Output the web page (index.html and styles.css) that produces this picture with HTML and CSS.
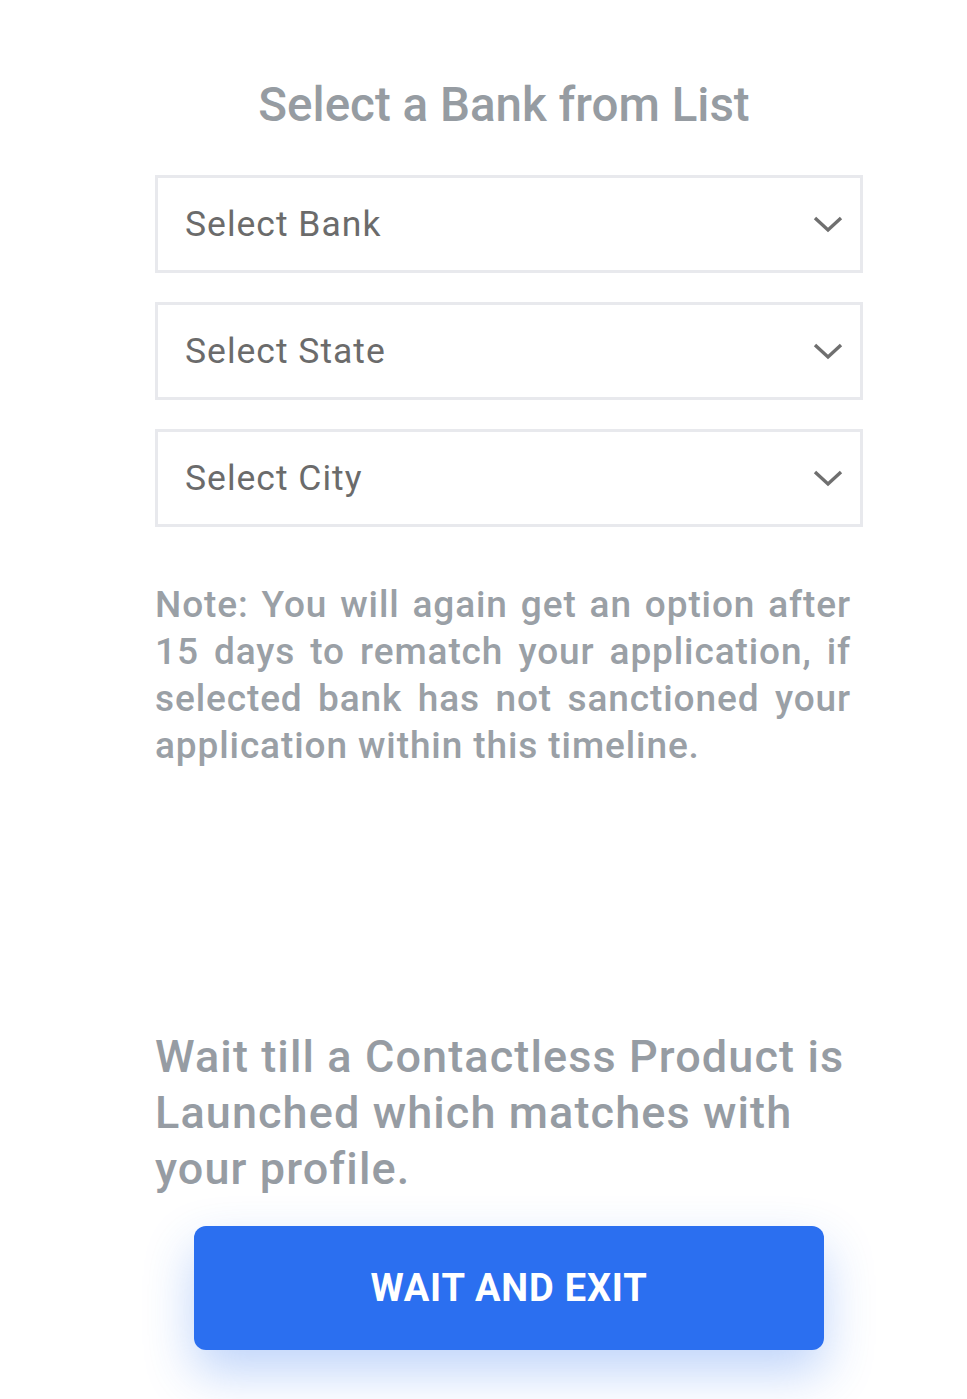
FILE: index.html
```html
<!DOCTYPE html>
<html>
<head>
<meta charset="utf-8">
<link rel="stylesheet" href="styles.css">
</head>
<body>
<main class="page">
  <h1 class="title">Select a Bank from List</h1>
  <div class="selects">
    <div class="select"><span>Select Bank</span><svg class="chev" viewBox="0 0 32 20" width="32" height="20"><path d="M3 4 L16 16 L29 4" fill="none" stroke="#6f6f6f" stroke-width="3.4"/></svg></div>
    <div class="select"><span>Select State</span><svg class="chev" viewBox="0 0 32 20" width="32" height="20"><path d="M3 4 L16 16 L29 4" fill="none" stroke="#6f6f6f" stroke-width="3.4"/></svg></div>
    <div class="select"><span>Select City</span><svg class="chev" viewBox="0 0 32 20" width="32" height="20"><path d="M3 4 L16 16 L29 4" fill="none" stroke="#6f6f6f" stroke-width="3.4"/></svg></div>
  </div>
  <p class="note">Note: You will again get an option after 15 days to rematch your application, if selected bank has not sanctioned your application within this timeline.</p>
  <p class="wait">Wait till a Contactless Product is Launched which matches with your profile.</p>
  <button class="btn">WAIT AND EXIT</button>
</main>
</body>
</html>
```
FILE: styles.css
```css
html, body { margin: 0; padding: 0; background: #ffffff; }
body { font-family: Roboto, "Noto Sans", sans-serif; }
.page { width: 708px; margin-left: 155px; padding-bottom: 49px; display: flex; flex-direction: column; }
.title { margin: 77px 10px 0 0; font-size: 47.5px; line-height: 56px; font-weight: 500; color: #969ca2; text-align: center; }
.selects { margin-top: 42px; display: flex; flex-direction: column; gap: 29px; }
.select { box-sizing: border-box; height: 98px; border: 3px solid #e8e9ed; display: flex; align-items: center; justify-content: space-between; padding: 0 16px 0 27px; }
.select span { font-size: 35.5px; letter-spacing: 1px; color: #6b6b6b; }
.chev { display: block; }
.note { margin: 54px 12px 0 0; font-size: 37px; line-height: 47px; font-weight: 500; letter-spacing: 0.9px; color: #9aa0a6; text-align: justify; }
.wait { margin: 260px 0 0; font-size: 45px; line-height: 56px; font-weight: 500; letter-spacing: 1.1px; color: #969ca3; }
.btn { margin: 29px 0 0 39px; width: 630px; height: 124px; border: none; border-radius: 12px; background: #2b6ff0; color: #fff; font-family: Roboto, sans-serif; font-size: 38px; font-weight: 700; letter-spacing: 0.8px; box-shadow: 0 22px 50px rgba(43,111,240,0.3); }
```
